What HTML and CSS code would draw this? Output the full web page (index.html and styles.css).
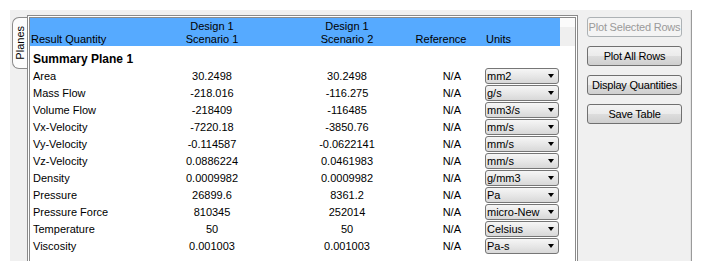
FILE: index.html
```html
<!DOCTYPE html>
<html lang="en">
<head>
    <meta charset="UTF-8">
    <title>Results</title>
    <link rel="stylesheet" href="styles.css">
</head>
<body>
    <div class="window">
        <div class="tab-strip">
            <div class="tab"><span>Planes</span></div>
        </div>

        <div class="grid-frame">
            <table class="results">
                <colgroup>
                    <col class="c-name">
                    <col class="c-s1">
                    <col class="c-s2">
                    <col class="c-ref">
                    <col class="c-unit">
                    <col class="c-fill">
                </colgroup>
                <thead>
                    <tr>
                        <th class="name">Result Quantity</th>
                        <th>Design 1<br>Scenario 1</th>
                        <th class="s2">Design 1<br>Scenario 2</th>
                        <th>Reference</th>
                        <th class="unit">Units</th>
                        <th class="filler"></th>
                    </tr>
                </thead>
                <tbody>
                    <tr class="group"><td colspan="6">Summary Plane 1</td></tr>
                    <tr><td class="name">Area</td><td>30.2498</td><td class="s2">30.2498</td><td class="ref">N/A</td><td class="unit"><div class="combo"><span>mm2</span></div></td><td></td></tr>
                    <tr><td class="name">Mass Flow</td><td>-218.016</td><td class="s2">-116.275</td><td class="ref">N/A</td><td class="unit"><div class="combo"><span>g/s</span></div></td><td></td></tr>
                    <tr><td class="name">Volume Flow</td><td>-218409</td><td class="s2">-116485</td><td class="ref">N/A</td><td class="unit"><div class="combo"><span>mm3/s</span></div></td><td></td></tr>
                    <tr><td class="name">Vx-Velocity</td><td>-7220.18</td><td class="s2">-3850.76</td><td class="ref">N/A</td><td class="unit"><div class="combo"><span>mm/s</span></div></td><td></td></tr>
                    <tr><td class="name">Vy-Velocity</td><td>-0.114587</td><td class="s2">-0.0622141</td><td class="ref">N/A</td><td class="unit"><div class="combo"><span>mm/s</span></div></td><td></td></tr>
                    <tr><td class="name">Vz-Velocity</td><td>0.0886224</td><td class="s2">0.0461983</td><td class="ref">N/A</td><td class="unit"><div class="combo"><span>mm/s</span></div></td><td></td></tr>
                    <tr><td class="name">Density</td><td>0.0009982</td><td class="s2">0.0009982</td><td class="ref">N/A</td><td class="unit"><div class="combo"><span>g/mm3</span></div></td><td></td></tr>
                    <tr><td class="name">Pressure</td><td>26899.6</td><td class="s2">8361.2</td><td class="ref">N/A</td><td class="unit"><div class="combo"><span>Pa</span></div></td><td></td></tr>
                    <tr><td class="name">Pressure Force</td><td>810345</td><td class="s2">252014</td><td class="ref">N/A</td><td class="unit"><div class="combo"><span>micro-New</span></div></td><td></td></tr>
                    <tr><td class="name">Temperature</td><td>50</td><td class="s2">50</td><td class="ref">N/A</td><td class="unit"><div class="combo"><span>Celsius</span></div></td><td></td></tr>
                    <tr><td class="name">Viscosity</td><td>0.001003</td><td class="s2">0.001003</td><td class="ref">N/A</td><td class="unit"><div class="combo"><span>Pa-s</span></div></td><td></td></tr>
                </tbody>
            </table>
        </div>

        <div class="side">
            <button disabled>Plot Selected Rows</button>
            <button>Plot All Rows</button>
            <button>Display Quantities</button>
            <button>Save Table</button>
        </div>
    </div>
</body>
</html>
```

FILE: styles.css
```css
body {
    margin: 0;
    background: #fff;
    font-family: "Liberation Sans", Arial, sans-serif;
    font-size: 11px;
    color: #000;
}

.window {
    display: flex;
    margin: 10px 0 0 10px;
    width: 681px;
    height: 251px;
    background: #f0f0f0;
    border-right: 1px solid #9a9a9a;
    overflow: hidden;
}

.tab-strip {
    width: 15px;
    padding: 7px 0 0 2px;
    flex: none;
}

.tab {
    width: 15px;
    height: 50px;
    background: #fcfcfc;
    border: 1px solid #8c8c8c;
    border-right: none;
    border-radius: 7px 0 0 7px;
    display: flex;
    align-items: center;
    justify-content: center;
}

.tab span {
    writing-mode: vertical-rl;
    transform: rotate(180deg);
    line-height: 13px;
}

.grid-frame {
    width: 545px;
    margin-top: 5px;
    flex: none;
    background: #fff;
    border: 3px double #8a8a8a;
    border-bottom: none;
}

.results {
    width: 545px;
    table-layout: fixed;
    border-collapse: collapse;
}

.c-name { width: 120px; }
.c-s1 { width: 124px; }
.c-s2 { width: 136px; }
.c-ref { width: 62px; }
.c-unit { width: 88px; }
.c-fill { width: 15px; }

.results th {
    height: 28px;
    padding: 0;
    background: #56aaff;
    font-weight: normal;
    line-height: 13px;
    vertical-align: bottom;
    text-align: center;
    white-space: nowrap;
}

.results th.name {
    text-align: left;
    padding-left: 1px;
}

.results th.unit {
    text-align: left;
    padding-left: 14px;
}

.results th.filler {
    background: linear-gradient(#fbfbfb 0 9px, #efefef 9px);
}

.results td {
    height: 17px;
    padding: 0;
    line-height: 17px;
    text-align: center;
    white-space: nowrap;
}

.results .s2 {
    padding-left: 10px;
}

.results td.name {
    text-align: left;
    padding-left: 3px;
}

.results td.ref {
    text-align: right;
    padding-right: 11px;
}

.results td.unit {
    text-align: left;
    padding-left: 13px;
}

.results tr.group td {
    height: 22px;
    text-align: left;
    padding-left: 3px;
    font-weight: bold;
    font-size: 12px;
    vertical-align: bottom;
}

.combo {
    position: relative;
    box-sizing: border-box;
    width: 74px;
    height: 16px;
    margin-top: -1px;
    padding-left: 1px;
    border: 1px solid #767676;
    border-radius: 3px;
    background: linear-gradient(#f6f6f6, #e6e6e6 55%, #d8d8d8);
    line-height: 14px;
}

.combo span {
    display: block;
    width: 60px;
}

.combo::after {
    content: "";
    position: absolute;
    right: 4px;
    top: 5px;
    border-left: 3.5px solid transparent;
    border-right: 3.5px solid transparent;
    border-top: 4px solid #000;
}

.side {
    flex: 1;
    display: flex;
    flex-direction: column;
    gap: 9px;
    padding: 7px 0 0 9px;
    border-right: 1px solid #e4e4e4;
}

button {
    width: 95px;
    height: 20px;
    padding: 0;
    font-family: inherit;
    font-size: 11px;
    letter-spacing: -0.2px;
    color: #000;
    background: linear-gradient(#f3f3f3, #ebebeb 50%, #dddddd 50%, #cfcfcf);
    border: 1px solid #707070;
    border-radius: 3px;
    white-space: nowrap;
}

button:disabled {
    color: #9a9a9a;
    background: #f4f4f4;
    border-color: #adb2b5;
}
```
